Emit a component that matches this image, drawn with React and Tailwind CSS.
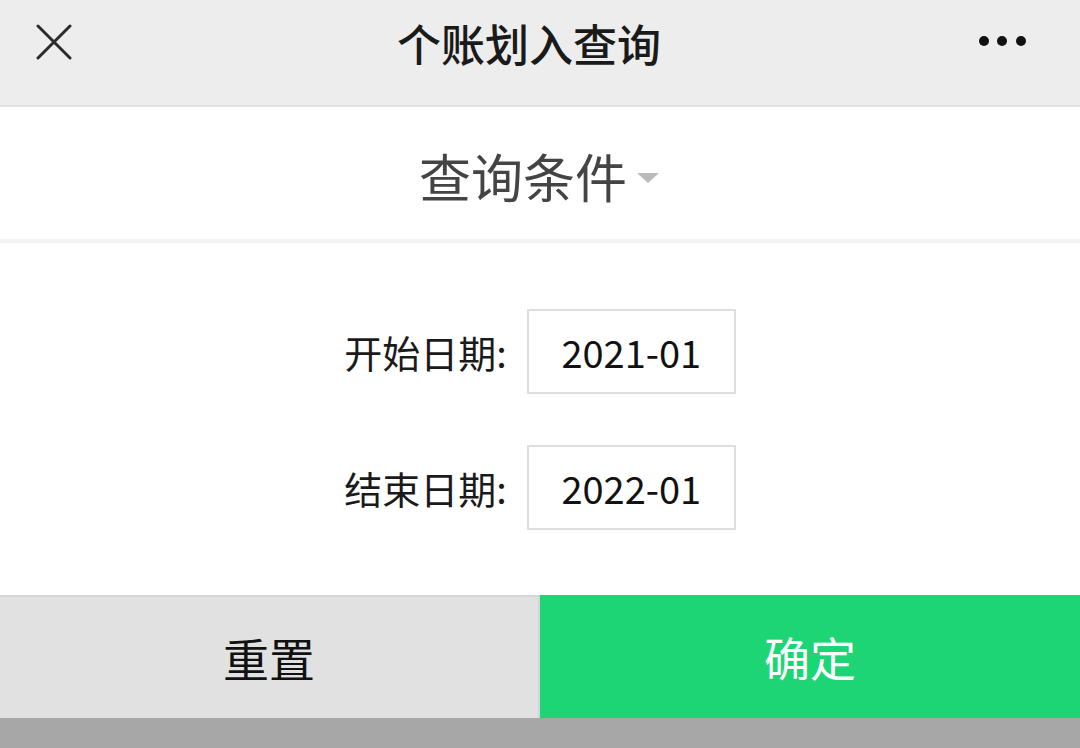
export default function App() {
  const font = { fontFamily: '"Noto Sans CJK SC", "Noto Sans", sans-serif' };

  return (
    <div className="flex h-[748px] w-[1080px] flex-col overflow-hidden bg-white" style={font}>
      {/* Top bar */}
      <div className="flex h-[107px] shrink-0 items-start justify-between border-b-2 border-[#e2e2e2] bg-[#ededed] pl-[36px] pr-[50px] pt-[16px]">
        <svg width="36" height="50" viewBox="0 0 36 50" className="mt-[2px]">
          <path d="M2 8 L34 40 M34 8 L2 40" stroke="#2b2b2b" strokeWidth="3" strokeLinecap="round" />
        </svg>
        <h1 className="ml-[12px] text-[44px] font-medium leading-[54px] text-[#1a1a1a]">个账划入查询</h1>
        <svg width="56" height="50" viewBox="0 0 56 50">
          <circle cx="10" cy="25" r="5" fill="#111" />
          <circle cx="28" cy="25" r="5" fill="#111" />
          <circle cx="47" cy="25" r="5" fill="#111" />
        </svg>
      </div>

      {/* Filter title */}
      <div className="flex h-[136px] shrink-0 items-center justify-center border-b-[4px] border-[#f2f2f2] pt-[6px]">
        <span className="text-[52px] leading-[62px] text-[#444]">查询条件</span>
        <svg width="26" height="14" viewBox="0 0 26 14" className="ml-[8px] mt-[4px]">
          <path d="M2 2 L24 2 L13 12 Z" fill="#bbbbbb" />
        </svg>
      </div>

      {/* Form */}
      <div className="flex flex-1 flex-col items-center pt-[66px]">
        <div className="flex items-center gap-[20px]">
          <span className="text-[38px] leading-[46px] text-[#1a1a1a]">开始日期:</span>
          <div className="flex h-[85px] w-[209px] items-center justify-center border-2 border-[#dedede] text-[38px] text-[#111]">
            2021-01
          </div>
        </div>
        <div className="mt-[51px] flex items-center gap-[20px]">
          <span className="text-[38px] leading-[46px] text-[#1a1a1a]">结束日期:</span>
          <div className="flex h-[85px] w-[209px] items-center justify-center border-2 border-[#dedede] text-[38px] text-[#111]">
            2022-01
          </div>
        </div>
      </div>

      {/* Buttons */}
      <div className="flex h-[123px] shrink-0">
        <button className="flex w-[540px] items-center justify-center border-t-2 border-r-2 border-[#d6d6d6] bg-[#e1e1e1] text-[46px] text-[#111]">
          重置
        </button>
        <button className="flex w-[540px] items-center justify-center bg-[#1dd575] text-[46px] text-white">
          确定
        </button>
      </div>
      <div className="h-[30px] shrink-0 bg-[#a7a7a7]" />
    </div>
  );
}
